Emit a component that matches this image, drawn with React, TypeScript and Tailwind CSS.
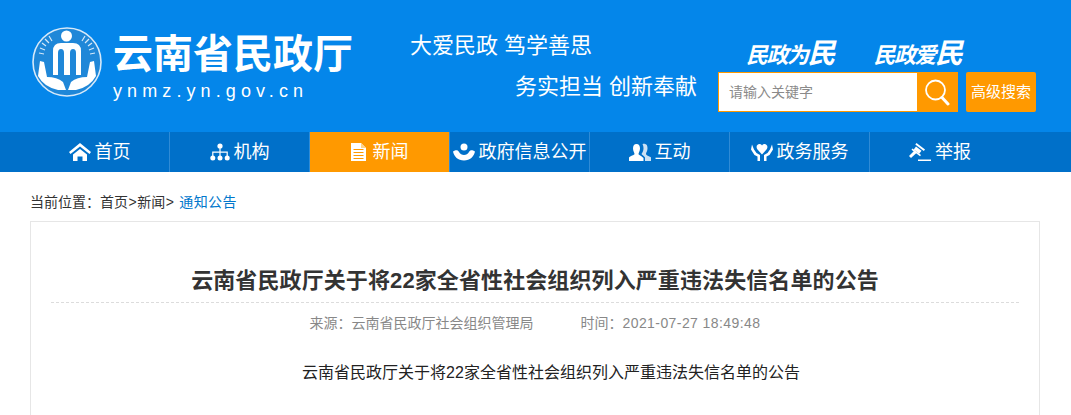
import React from 'react';

const cjk = '"Liberation Sans", "Noto Sans CJK SC", sans-serif';

const Logo = () => (
  <svg width="70" height="70" viewBox="0 0 70 70" className="shrink-0">
    <circle cx="35" cy="35" r="34" fill="#1f87d8" stroke="#d6e9f9" strokeWidth="1.6" />
    <circle cx="34.500" cy="9" r="5.500" fill="#fff" />
    <path d="M21 48V24q0-8 8-8h12q8 0 8 8v24h-5V26q0-4-3-4t-3 4v22h-6V26q0-4-3-4t-3 4v22z" fill="#fff" />
    <path d="M8 34l4 1 3 15q10 0 16 5l3 8h-8q-14-3-20-14z" fill="#fff" />
    <path d="M62 34l-4 1-3 15q-10 0-16 5l-3 8h8q14-3 20-14z" fill="#fff" />
    <g stroke="#d6e9f9" strokeWidth="1.200">
      <path d="M17 9l3 5M13 12l4 4M10 16l4 3M8 21l5 2M7 26l5 1" />
      <path d="M53 9l-3 5M57 12l-4 4M60 16l-4 3M62 21l-5 2M63 26l-5 1" />
    </g>
  </svg>
);

const SearchIcon = () => (
  <svg width="26" height="28" viewBox="0 0 26 28" fill="none" stroke="#fff">
    <circle cx="11.500" cy="12" r="9.500" strokeWidth="1.800" />
    <path d="M18 19.500l6 6.500" strokeWidth="3" strokeLinecap="round" />
  </svg>
);

const HomeIcon = () => (
  <svg width="22" height="18" viewBox="0 0 22 18" fill="#fff">
    <path d="M11 0L0 9l1.500 2L11 3.500 20.500 11 22 9z" />
    <path d="M4 11.500L11 6l7 5.500V18h-4.500v-4.500h-5V18H4z" />
  </svg>
);

const OrgIcon = () => (
  <svg width="20" height="18" viewBox="0 0 20 18" fill="#fff">
    <circle cx="10" cy="3" r="2.600" />
    <circle cx="2.800" cy="15" r="2.500" />
    <circle cx="10" cy="15" r="2.500" />
    <circle cx="17.200" cy="15" r="2.500" />
    <path d="M9.400 5h1.200v3.500h7.200V13h-1.200V9.700h-6V13H9.400V9.700h-6V13H2.200V8.500h7.200z" />
  </svg>
);

const DocIcon = () => (
  <svg width="15" height="18" viewBox="0 0 15 18">
    <path d="M0 0h10l5 5v13H0z" fill="#fff" />
    <path d="M10 0v5h5z" fill="#ffd48a" />
    <path d="M2.500 6.500h10M2.500 9.500h10M2.500 12.500h10M2.500 15.500h10" stroke="#ff9900" strokeWidth="1" />
  </svg>
);

const GovIcon = () => (
  <svg width="22" height="18" viewBox="0 0 22 18" fill="#fff">
    <circle cx="11" cy="4" r="3.500" />
    <path d="M0 8.500C3 6.500 5 7 6 9c1 2 3 3 5 3s4-1 5-3c1-2 3-2.500 6-.5-1 5-5 9-11 9S1 13.500 0 8.500z" />
  </svg>
);

const UsersIcon = () => (
  <svg width="22" height="18" viewBox="0 0 22 18" fill="#fff">
    <path opacity="0.8" d="M15.500 1c2.500 0 3 2 3 4.500s-1.500 4-1.500 5.500 4 2.500 5 3.500V18h-6v-3.500c-.8-1.500-3-2.500-3.500-3.500 1-1.500 2-3.500 2-5.500s-.5-3.500-1-4.200c.5-.5 1.200-.8 2-.8z" />
    <path d="M7.500 1c2.500 0 3.500 2 3.500 4.500S9.500 10 9.500 11s4 2.500 5 4v3H0v-3.500C1 13 5.500 12 5.500 11S4 8 4 5.500 5 1 7.500 1z" />
  </svg>
);

const ServiceIcon = () => (
  <svg width="22" height="18" viewBox="0 0 22 18" fill="#fff">
    <path d="M11 11.500L6.500 6.500C4.500 4 6 1 8.500 1c1 0 2 .5 2.500 1.500C11.500 1.500 12.500 1 13.500 1 16 1 17.500 4 15.500 6.500z" />
    <path d="M1 1.500L0 6.500l3.500 5.500 3 1.500V18h2.500v-6L5.500 10 3 6.500z" />
    <path d="M21 1.500l1 5-3.500 5.500-3 1.500V18H13v-6l3.500-2L19 6.500z" />
  </svg>
);

const GavelIcon = () => (
  <svg width="22" height="18" viewBox="0 0 22 18" fill="#fff">
    <path d="M7.500 0l8.500 6.500-1.200 1.500L6.300 1.500z" />
    <path d="M7 3.500l5.500 4.200-2.300 3L4.700 6.500z" />
    <path d="M5.500 7.500l2.500 2-6 5.500L0 13z" />
    <path d="M3.500 5.500l8.500 6.500-1 1.200L2.500 6.800z" />
    <path d="M9 16.500h13V18H9z" />
  </svg>
);

const navItems = [
  { label: '首页', icon: <HomeIcon /> },
  { label: '机构', icon: <OrgIcon /> },
  { label: '新闻', icon: <DocIcon />, active: true },
  { label: '政府信息公开', icon: <GovIcon /> },
  { label: '互动', icon: <UsersIcon /> },
  { label: '政务服务', icon: <ServiceIcon /> },
  { label: '举报', icon: <GavelIcon />, last: true },
];

const Slogan = ({ small, big }: { small: string; big: string }) => (
  <span className="italic font-bold text-white leading-none whitespace-nowrap">
    <span className="text-[22px] tracking-[-1.5px]">{small}</span>
    <span className="text-[28px] tracking-[-2px]">{big}</span>
  </span>
);

export default function App() {
  return (
    <div className="h-[415px] overflow-hidden bg-white" style={{ fontFamily: cjk }}>
      <header className="h-[132px] bg-[#0486ea] flex">
        <div className="w-[380px] pl-[32px] pt-[27px] flex gap-[11px]">
          <Logo />
          <div className="pt-[2px]">
            <div className="text-[40px] leading-[50px] font-bold text-white whitespace-nowrap">云南省民政厅</div>
            <div className="mt-[1px] text-[18px] leading-[22px] text-white tracking-[5.1px]">ynmz.yn.gov.cn</div>
          </div>
        </div>
        <div className="w-[320px]">
          <div className="pt-[32px] pl-[30px] text-[22px] leading-[28px] text-white whitespace-nowrap">大爱民政 笃学善思</div>
          <div className="pt-[13px] pl-[135px] text-[22px] leading-[28px] text-white whitespace-nowrap">务实担当 创新奉献</div>
        </div>
        <div className="pl-[18px] pt-[36px]">
          <div className="flex gap-[40px] pl-[28px] h-[36px] pb-[4px] items-end">
            <Slogan small="民政为" big="民" />
            <Slogan small="民政爱" big="民" />
          </div>
          <div className="flex gap-[8px]">
            <div className="w-[240px] h-[40px] flex border border-[#ff9900] bg-white">
              <div className="flex-1 pl-[10px] text-[14px] leading-[38px] text-[#8a8a8a]">请输入关键字</div>
              <div className="w-[40px] bg-[#ff9900] flex items-center justify-center">
                <SearchIcon />
              </div>
            </div>
            <div className="w-[70px] h-[40px] rounded-[2px] bg-[#ff9900] text-white text-[15px] leading-[40px] text-center">高级搜索</div>
          </div>
        </div>
      </header>

      <nav className="h-[40px] bg-[#0070c9] pl-[30px] flex">
        {navItems.map((item) => (
          <div
            key={item.label}
            className={`w-[140px] flex items-center justify-center text-[18px] text-white whitespace-nowrap ${item.last ? '' : 'border-r border-[#2f8bd6]'} ${item.active ? 'bg-[#ff9900] gap-[7px]' : 'gap-[4px]'}`}
          >
            {item.icon}
            <span>{item.label}</span>
          </div>
        ))}
      </nav>

      <div className="px-[30px]">
        <div className="h-[49px] pt-[21px] text-[14px] leading-[18px] text-[#333] whitespace-nowrap">
          当前位置：首页<span className="mx-[0.5px]">&gt;</span>新闻<span className="mx-[0.5px]">&gt;</span>{' '}
          <span className="ml-[1px] tracking-[0.4px] text-[#0077cc]">通知公告</span>
        </div>
        <article className="w-[1010px] h-[300px] border border-[#e6e6e6] px-[20px]">
          <h1 className="h-[81px] pt-[45px] text-[22px] leading-[28px] font-bold text-[#333] text-center tracking-[0.1px] border-b border-dashed border-[#dcdcdc]">
            云南省民政厅关于将22家全省性社会组织列入严重违法失信名单的公告
          </h1>
          <div className="pt-[10px] flex justify-center gap-[47px] text-[14px] leading-[20px] text-[#888]">
            <span>来源：云南省民政厅社会组织管理局</span>
            <span>
              时间：<span className="tracking-[0.42px]">2021-07-27 18:49:48</span>
            </span>
          </div>
          <p className="pt-[30px] text-[16px] leading-[20px] text-[#222] text-center indent-[32px]">
            云南省民政厅关于将22家全省性社会组织列入严重违法失信名单的公告
          </p>
        </article>
      </div>
    </div>
  );
}
